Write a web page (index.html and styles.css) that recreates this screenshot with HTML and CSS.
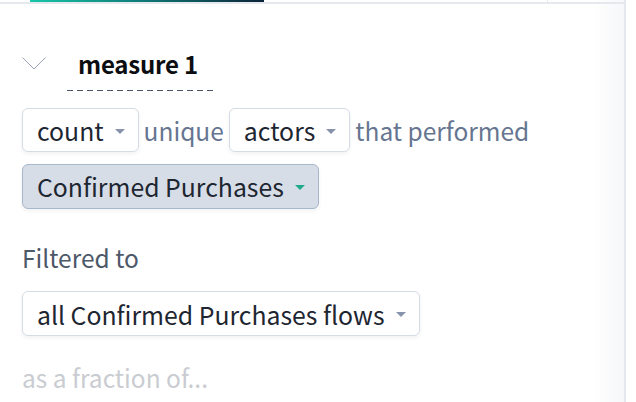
FILE: index.html
```html
<!DOCTYPE html>
<html>
<head>
<meta charset="utf-8">
<link rel="stylesheet" href="styles.css">
</head>
<body>
<div class="panel">
  <div class="tabs">
    <div class="tab tab-active"></div>
    <div class="tab tab-mid"></div>
    <div class="tab tab-last"></div>
  </div>
  <div class="content">
    <div class="header">
      <svg class="chevron" width="24" height="13" viewBox="0 0 24 13"><polyline points="0.5,0.5 12,12 23.5,0.5" fill="none" stroke="#9aa3b4" stroke-width="1"/></svg>
      <div class="title-input"><span class="title">measure 1</span></div>
    </div>
    <div class="sentence">
      <span class="pill">count<span class="caret"></span></span>
      <span class="word">unique</span>
      <span class="pill">actors<span class="caret"></span></span>
      <span class="word">that performed</span>
    </div>
    <div class="sentence">
      <span class="pill pill-selected">Confirmed Purchases<span class="caret caret-teal"></span></span>
    </div>
    <div class="label">Filtered to</div>
    <div class="sentence sentence-filter">
      <span class="pill pill-tall">all Confirmed Purchases flows<span class="caret"></span></span>
    </div>
    <div class="muted">as a fraction of...</div>
  </div>
</div>
</body>
</html>
```
FILE: styles.css
```css
html, body {
  margin: 0;
  padding: 0;
  background: #ffffff;
}
body {
  font-family: "Noto Sans CJK SC", "Noto Sans", sans-serif;
  width: 636px;
  height: 402px;
  overflow: hidden;
}
.panel {
  width: 624px;
  height: 402px;
  border-right: 2px solid #e4e8ee;
  background: linear-gradient(to right, #ffffff 0, #ffffff 592px, #f6f7f9 624px);
}
.tabs {
  display: flex;
  height: 2px;
  border-bottom: 2px solid #e5e9ee;
}
.tab {
  height: 2px;
}
.tab-active {
  margin-left: 30px;
  width: 234px;
  background: linear-gradient(to right, #17c7a8, #0f7f7b 45%, #0d2438);
}
.tab-mid {
  width: 283px;
  border-right: 1px solid #e5e9ee;
  height: 4px;
}
.tab-last {
  flex: 1;
}
.content {
  padding: 0 0 0 22px;
}
.header {
  display: flex;
  align-items: flex-start;
  margin-top: 49px;
  height: 43px;
}
.chevron {
  display: block;
  margin-top: 4px;
}
.title-input {
  margin-left: 21px;
  width: 150px;
  height: 38px;
  padding-left: 11px;
  box-sizing: border-box;
  background: repeating-linear-gradient(to right, #4b5567 0, #4b5567 6px, transparent 6px, transparent 10px) bottom left / 100% 1px no-repeat;
}
.title {
  display: block;
  font-weight: 700;
  font-size: 24px;
  line-height: 21px;
  color: #0b0d10;
  letter-spacing: -0.2px;
}
.sentence {
  display: flex;
  align-items: center;
  gap: 5px;
  margin-top: 12px;
  height: 44px;
}
.sentence-filter {
  margin-top: 18px;
  height: 45px;
}
.pill {
  display: inline-flex;
  align-items: center;
  height: 44px;
  box-sizing: border-box;
  padding: 0 13px 0 14px;
  border: 1px solid #d6dce6;
  border-radius: 6px;
  background: #ffffff;
  box-shadow: 0 2px 4px rgba(30, 40, 60, 0.06);
  font-size: 24.8px;
  color: #1e2631;
}
.pill-selected {
  background: #d6dde7;
  border-color: #a8b8cc;
  height: 45px;
}
.pill-tall {
  height: 45px;
}
.caret {
  display: inline-block;
  width: 0;
  height: 0;
  margin-left: 11px;
  margin-top: 2px;
  border-left: 5px solid transparent;
  border-right: 5px solid transparent;
  border-top: 5px solid #8792ab;
}
.caret-teal {
  border-top-color: #1ea98a;
}
.word {
  font-size: 24.5px;
  color: #667590;
}
.label {
  margin-top: 35px;
  font-size: 24.5px;
  line-height: 30px;
  color: #4d5868;
}
.muted {
  margin-top: 27px;
  font-size: 24.5px;
  line-height: 30px;
  color: #c9ccd1;
}
```
